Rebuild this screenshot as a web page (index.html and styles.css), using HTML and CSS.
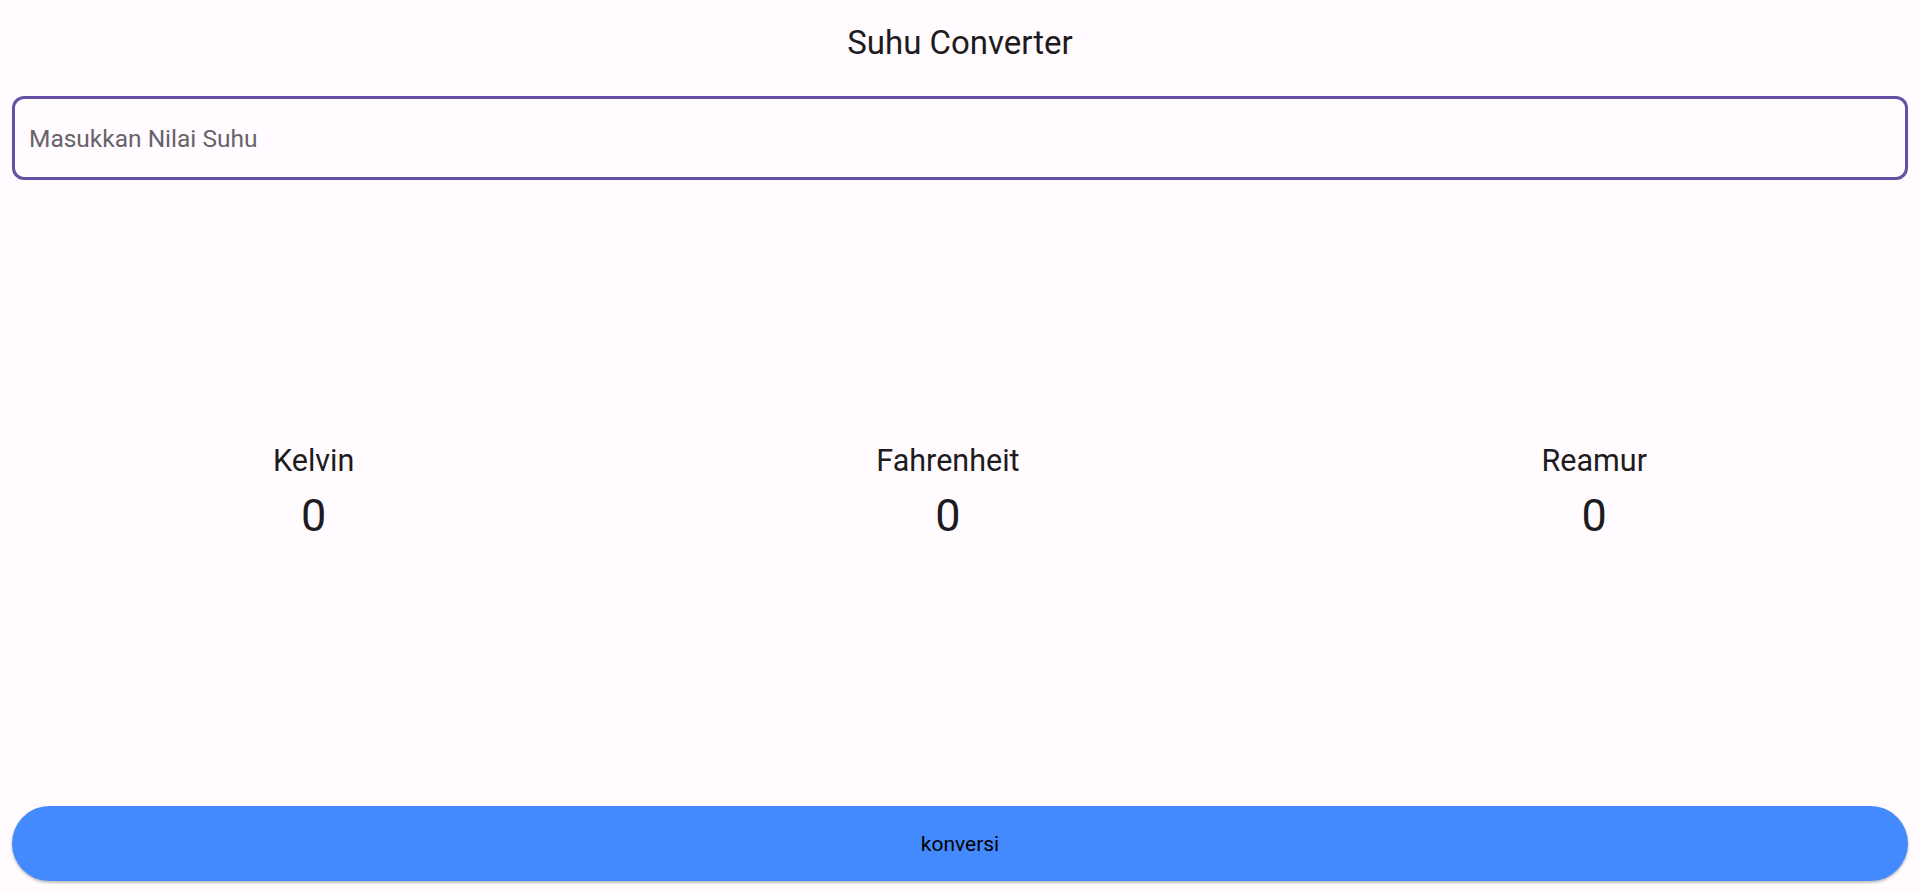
FILE: index.html
```html
<!DOCTYPE html>
<html lang="id">
<head>
<meta charset="utf-8">
<title>Suhu Converter</title>
<link rel="stylesheet" href="styles.css">
</head>
<body>
<div class="app">
  <header class="appbar">
    <h1 class="title">Suhu Converter</h1>
  </header>
  <main class="content">
    <div class="field">
      <input class="input" type="text" placeholder="Masukkan Nilai Suhu">
    </div>
    <section class="results">
      <div class="result">
        <div class="label">Kelvin</div>
        <div class="value">0</div>
      </div>
      <div class="result">
        <div class="label">Fahrenheit</div>
        <div class="value">0</div>
      </div>
      <div class="result">
        <div class="label">Reamur</div>
        <div class="value">0</div>
      </div>
    </section>
    <button class="btn" type="button">konversi</button>
  </main>
</div>
</body>
</html>
```
FILE: styles.css
```css
* { box-sizing: border-box; }
html, body { margin: 0; padding: 0; }
body {
  background: #fffbfe;
  font-family: Roboto, "Noto Sans", "Liberation Sans", sans-serif;
  color: #1d1b20;
}
.app {
  height: 893px;
  display: flex;
  flex-direction: column;
}
.appbar {
  height: 84px;
  display: flex;
  align-items: center;
  justify-content: center;
  flex: none;
}
.title {
  margin: 0;
  font-size: 33px;
  font-weight: 400;
  line-height: 1;
  color: #1d1b20;
}
.content {
  flex: 1;
  display: flex;
  flex-direction: column;
  padding: 12px;
}
.field {
  height: 84px;
  border: 3px solid #6750a4;
  border-radius: 12px;
  display: flex;
  align-items: center;
  padding-left: 14px;
  flex: none;
}
.input {
  border: 0;
  outline: none;
  background: transparent;
  font-family: inherit;
  font-size: 24.5px;
  width: 100%;
  color: #1d1b20;
  padding: 0;
}
.input::placeholder {
  color: #67636b;
  opacity: 1;
}
.results {
  flex: 1;
  display: flex;
  justify-content: space-around;
  align-items: center;
}
.result {
  display: flex;
  flex-direction: column;
  align-items: center;
}
.label {
  font-size: 30.5px;
  line-height: 36px;
}
.value {
  font-size: 45px;
  line-height: 56px;
  margin-top: 9px;
}
.btn {
  flex: none;
  height: 75px;
  border: 0;
  border-radius: 38px;
  background: #448aff;
  color: #000;
  font-family: inherit;
  font-size: 21px;
  font-weight: 400;
  box-shadow: 0 1.5px 3px rgba(0,0,0,0.3);
  cursor: pointer;
}
```
